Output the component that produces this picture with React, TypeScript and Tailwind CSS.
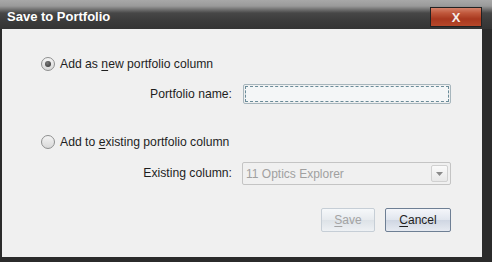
import React from 'react';

const Radio: React.FC<{ checked?: boolean }> = ({ checked }) => (
  <span className="flex h-[14px] w-[14px] items-center justify-center rounded-full border border-[#8e8f8f] bg-[linear-gradient(to_bottom,#f4f4f4,#d8d8d8)]">
    {checked && <span className="h-[6px] w-[6px] rounded-full bg-[radial-gradient(circle_at_40%_35%,#7a7a7a,#2e2e2e)]" />}
  </span>
);

const App: React.FC = () => {
  return (
    <div className="flex h-[262px] w-[492px] flex-col bg-[#2b2b2b] font-['Liberation_Sans',Arial,sans-serif] text-[12px] text-[#1e1e1e]">
      {/* title bar */}
      <div className="flex h-[29px] items-start bg-[linear-gradient(to_bottom,#a8a8a8_0px,#9a9a9a_6px,#6a6a6a_10px,#474747_13px,#3c3c3c_20px,#343434_29px)] pl-[7px] pr-[10px]">
        <span className="mt-[9px] text-[13px] font-bold leading-[16px] text-white">Save to Portfolio</span>
        <button className="ml-auto mt-[7px] flex h-[20px] w-[52px] items-center justify-center border border-[#222] bg-[linear-gradient(to_bottom,#d4826a_0px,#c0583c_5px,#a8381f_11px,#b84a2c_19px)]">
          <span className="text-[13px] font-bold leading-none text-[#f4ece8]">X</span>
        </button>
      </div>

      {/* body */}
      <div className="ml-[2px] mr-[10px] flex h-[228px] flex-col bg-[#f0f0f0]">
        <div className="ml-[39px] mt-[28px] flex h-[14px] items-center gap-[5px]">
          <Radio checked />
          <span className="text-[12.2px]">
            Add as <span className="underline underline-offset-2">n</span>ew portfolio column
          </span>
        </div>

        <div className="mt-[13px] flex h-[20px] items-center">
          <span className="w-[230px] text-right text-[12.2px]">Portfolio name:</span>
          <div className="ml-[11px] h-[20px] w-[208px] rounded-[2px] border border-[#a7b6bd] p-[1px]">
            <div className="h-full w-full border border-dashed border-[#6b8c99] bg-[#f4f6f7]" />
          </div>
        </div>

        <div className="ml-[39px] mt-[31px] flex h-[14px] items-center gap-[5px]">
          <Radio />
          <span className="text-[12.2px]">
            Add to <span className="underline underline-offset-2">e</span>xisting portfolio column
          </span>
        </div>

        <div className="mt-[13px] flex h-[23px] items-center">
          <span className="w-[230px] text-right text-[12.2px]">Existing column:</span>
          <div className="ml-[10px] flex h-[23px] w-[209px] items-center rounded-[2px] border border-[#c4c4c4] bg-[#f0f0f0] pl-[3px] pr-[2px]">
            <span className="text-[#a0a0a0]">11 Optics Explorer</span>
            <span className="ml-auto flex h-[17px] w-[17px] items-center justify-center rounded-[2px] border border-[#d0d0d0] bg-[linear-gradient(to_bottom,#fafafa,#e8e8e8)]">
              <svg width="7" height="4" viewBox="0 0 7 4">
                <path d="M0 0h7L3.5 4z" fill="#8a8a8a" />
              </svg>
            </span>
          </div>
        </div>

        <div className="mr-[31px] mt-[23px] flex justify-end gap-[10px]">
          <button className="h-[24px] w-[54px] rounded-[2px] border border-[#c6ced6] bg-[linear-gradient(to_bottom,#f6f8fa,#e6eaee_50%,#dde2e7_51%,#eef1f4)] text-[#a3a3a3]">
            <span className="underline underline-offset-2">S</span>ave
          </button>
          <button className="h-[24px] w-[66px] rounded-[2px] border border-[#6e7f94] bg-[linear-gradient(to_bottom,#f4f6fa,#e0e5ee_50%,#cfd6e2_51%,#e6eaf1)] text-[#1e1e1e]">
            <span className="underline underline-offset-2">C</span>ancel
          </button>
        </div>
      </div>
    </div>
  );
};

export default App;
